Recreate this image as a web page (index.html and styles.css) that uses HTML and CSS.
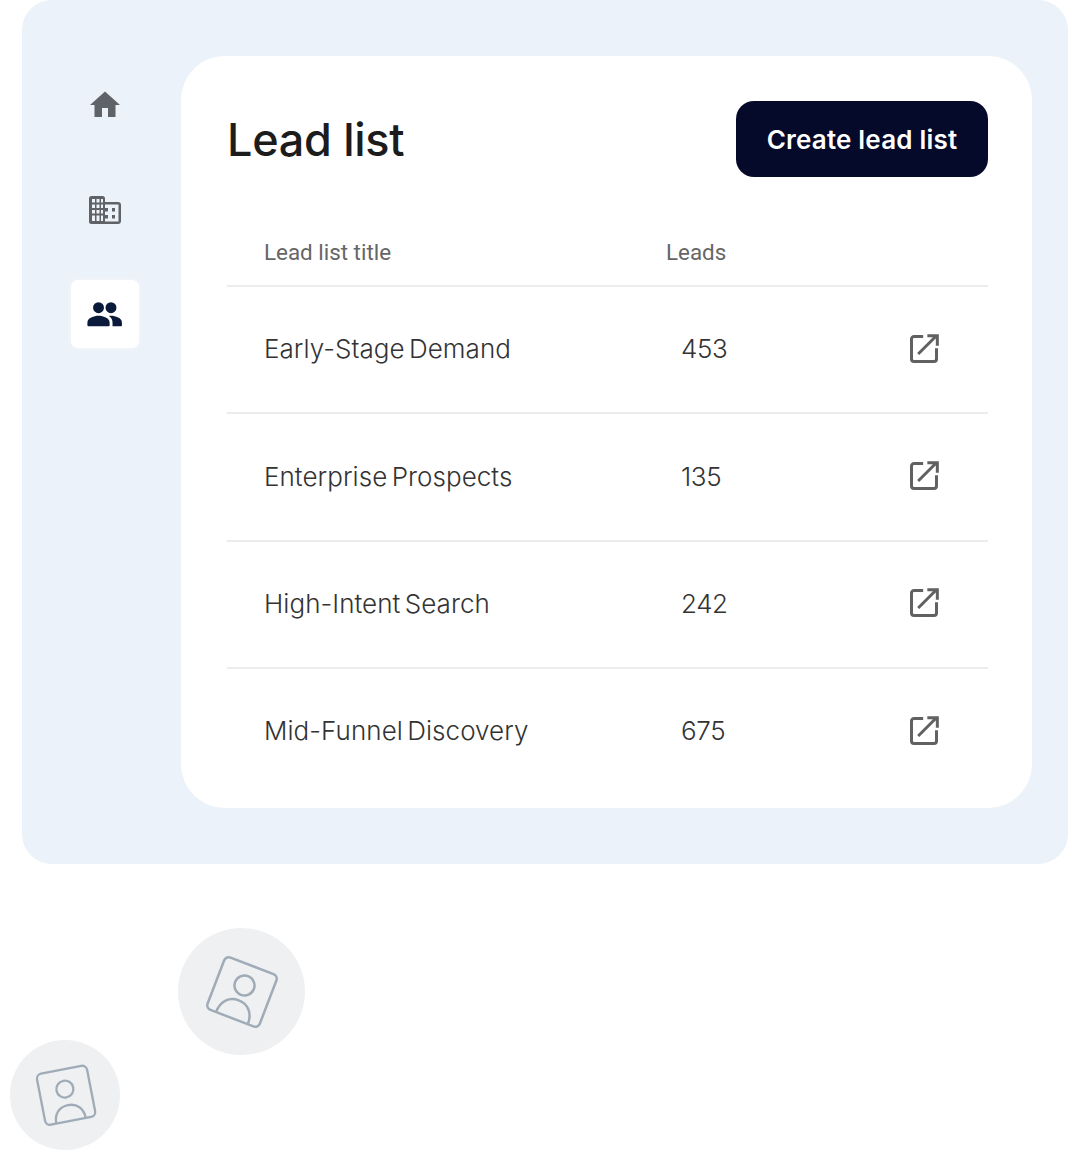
FILE: index.html
```html
<!DOCTYPE html>
<html>
<head>
<meta charset="utf-8">
<title>Lead list</title>
<link rel="stylesheet" href="styles.css">
</head>
<body>

<div class="panel">
  <div class="side">
    <a class="side-item">
      <svg width="36" height="36" viewBox="0 0 24 24"><path fill="#5f6368" d="M10 20v-6h4v6h5v-8h3L12 3 2 12h3v8z"/></svg>
    </a>
    <a class="side-item">
      <svg width="32" height="28" viewBox="0 0 32 28" fill="#5f6368">
        <path fill-rule="evenodd" d="M0 2.500A2.500 2.500 0 0 1 2.500 0h11A2.500 2.500 0 0 1 16 2.500V6h13a3 3 0 0 1 3 3v16a3 3 0 0 1-3 3H2.500A2.500 2.500 0 0 1 0 25.500zM3 3v3.500h3V3zm4.500 0v3.500h3V3zm4.500 0v3.500h2V3zM3 8.500V12h3V8.500zm4.500 0V12h3V8.500zm4.500 0V12h2V8.500zM3 14v3.500h3V14zm4.500 0v3.500h3V14zm4.500 0v3.500h2V14zM3 19.500V25h3v-5.500zm4.500 0V25h3v-5.500zm4.500 0V25h2v-5.500zM16 8.500V25.500h13.500V8.500z"/>
        <rect x="16" y="12" width="3" height="3.500"/>
        <rect x="16" y="19" width="3" height="3.500"/>
        <rect x="23" y="12" width="3" height="3.500"/>
        <rect x="23" y="19" width="3" height="3.500"/>
      </svg>
    </a>
    <a class="side-item active">
      <svg class="people" width="41" height="41" viewBox="0 0 24 24"><path fill="#0b1a3a" d="M8.500 11.200a3.200 3.200 0 1 0 0-6.400 3.200 3.200 0 0 0 0 6.400zm7.300 0a3.200 3.200 0 1 0 0-6.400 3.200 3.200 0 0 0 0 6.400zM8.500 12.800c-2.600 0-6.500 1.300-6.500 3.900v1.700c0 .3.200.5.500.5h12c.3 0 .5-.2.500-.5v-1.700c0-2.600-3.900-3.900-6.500-3.900zm7.300 0c-.4 0-.8 0-1.200.1 1.300.9 2.100 2.100 2.100 3.800v1.700c0 .2 0 .4-.1.500h5.100c.3 0 .5-.2.500-.5v-1.700c0-2.600-3.800-3.900-6.400-3.900z"/></svg>
    </a>
  </div>

  <div class="card">
    <div class="card-head">
      <h1>Lead list</h1>
      <a class="btn">Create lead list</a>
    </div>

    <div class="head-row">
      <div class="head-title">Lead list title</div>
      <div>Leads</div>
    </div>
    <div class="row">
      <div class="col-title">Early-Stage Demand</div>
      <div class="col-leads">453</div>
      <svg width="40" height="40" viewBox="0 0 24 24"><path fill="none" stroke="#616161" stroke-width="1.800" d="M11.500 4.500H6a1.500 1.500 0 0 0-1.500 1.500v12A1.500 1.500 0 0 0 6 19.500h12a1.500 1.500 0 0 0 1.500-1.500v-6.500M8.500 15l10.500-10.500M14 4h6v6"/></svg>
    </div>
    <div class="row">
      <div class="col-title">Enterprise Prospects</div>
      <div class="col-leads">135</div>
      <svg width="40" height="40" viewBox="0 0 24 24"><path fill="none" stroke="#616161" stroke-width="1.800" d="M11.500 4.500H6a1.500 1.500 0 0 0-1.500 1.500v12A1.500 1.500 0 0 0 6 19.500h12a1.500 1.500 0 0 0 1.500-1.500v-6.500M8.500 15l10.500-10.500M14 4h6v6"/></svg>
    </div>
    <div class="row">
      <div class="col-title">High-Intent Search</div>
      <div class="col-leads">242</div>
      <svg width="40" height="40" viewBox="0 0 24 24"><path fill="none" stroke="#616161" stroke-width="1.800" d="M11.500 4.500H6a1.500 1.500 0 0 0-1.500 1.500v12A1.500 1.500 0 0 0 6 19.500h12a1.500 1.500 0 0 0 1.500-1.500v-6.500M8.500 15l10.500-10.500M14 4h6v6"/></svg>
    </div>
    <div class="row">
      <div class="col-title">Mid-Funnel Discovery</div>
      <div class="col-leads">675</div>
      <svg width="40" height="40" viewBox="0 0 24 24"><path fill="none" stroke="#616161" stroke-width="1.800" d="M11.500 4.500H6a1.500 1.500 0 0 0-1.500 1.500v12A1.500 1.500 0 0 0 6 19.500h12a1.500 1.500 0 0 0 1.500-1.500v-6.500M8.500 15l10.500-10.500M14 4h6v6"/></svg>
    </div>
  </div>
</div>

<div class="bubble bubble-big">
  <svg class="tilt-big" width="76" height="76" viewBox="0 0 76 76" fill="none" stroke="#9fabb7" stroke-width="2.500"><rect x="10" y="10" width="56" height="56" rx="5"/><circle cx="38" cy="31" r="10"/><path d="M21 66c0-12 7-19 17-19s17 7 17 19"/></svg>
</div>
<div class="bubble bubble-small">
  <svg class="tilt-small" width="66" height="66" viewBox="0 0 66 66" fill="none" stroke="#9fabb7" stroke-width="2.300"><rect x="8.500" y="7.500" width="51" height="52" rx="5"/><circle cx="34" cy="27.200" r="8.500"/><path d="M19 59.500c0-10 6-16 15-16s15 6 15 16"/></svg>
</div>

</body>
</html>
```
FILE: styles.css
```css
html, body {
  margin: 0;
  padding: 0;
  background-color: #fff;
}

body {
  position: relative;
  height: 1161px;
  overflow: hidden;
  font-family: "Inter", "Liberation Sans", sans-serif;
}

.panel {
  display: flex;
  box-sizing: border-box;
  width: 1046px;
  height: 864px;
  margin-left: 22px;
  padding: 56px 36px 56px 49px;
  background-color: #ecf2f9;
  border-radius: 30px;
}

.side {
  display: flex;
  flex-direction: column;
  width: 68px;
  margin-right: 42px;
}

.side-item {
  display: flex;
  align-items: center;
  justify-content: center;
  flex: none;
  width: 68px;
  height: 68px;
  margin-top: 15px;
  margin-bottom: 21.500px;
  border-radius: 7px;
}

.side-item.active {
  background-color: #fff;
  box-shadow: 0 0 6px rgba(255,255,255,0.5);
}

.people {
  margin-right: 2px;
}

.card {
  box-sizing: border-box;
  width: 851px;
  height: 752px;
  padding: 45px 44px 0 46px;
  background-color: #fff;
  border-radius: 44px;
}

.card-head {
  display: flex;
  align-items: center;
  justify-content: space-between;
  height: 76px;
}

h1 {
  margin: 0;
  font-size: 45px;
  font-weight: 500;
  letter-spacing: -0.300px;
  color: #1c1c1c;
}

.btn {
  display: flex;
  align-items: center;
  justify-content: center;
  width: 252px;
  height: 76px;
  background-color: #050a2b;
  border-radius: 18px;
  color: #fff;
  font-size: 26px;
  font-weight: 600;
  letter-spacing: 0.200px;
}

.head-row {
  display: flex;
  box-sizing: border-box;
  height: 108px;
  padding: 62px 0 0 37px;
  font-family: "Roboto", "Liberation Sans", sans-serif;
  font-size: 22.400px;
  color: #666;
}

.head-title {
  width: 402px;
}

.row {
  display: flex;
  align-items: center;
  box-sizing: border-box;
  height: 127.400px;
  padding: 0 0 2px 37px;
  border-top: 2px solid #ececec;
  color: #333;
  font-size: 26px;
  font-weight: 300;
  letter-spacing: 0.050px;
  word-spacing: -3px;
}

.col-title {
  width: 417px;
}

.col-leads {
  width: 185px;
  margin-right: 38px;
  letter-spacing: -0.400px;
}

.bubble {
  position: absolute;
  display: flex;
  align-items: center;
  justify-content: center;
  border-radius: 50%;
  background-color: #eef0f2;
}

.bubble-big {
  left: 178px;
  top: 928px;
  width: 127px;
  height: 127px;
}

.bubble-small {
  left: 10px;
  top: 1040px;
  width: 110px;
  height: 110px;
}

.tilt-big {
  transform: rotate(21deg);
}

.tilt-small {
  transform: rotate(-11deg);
}
```
